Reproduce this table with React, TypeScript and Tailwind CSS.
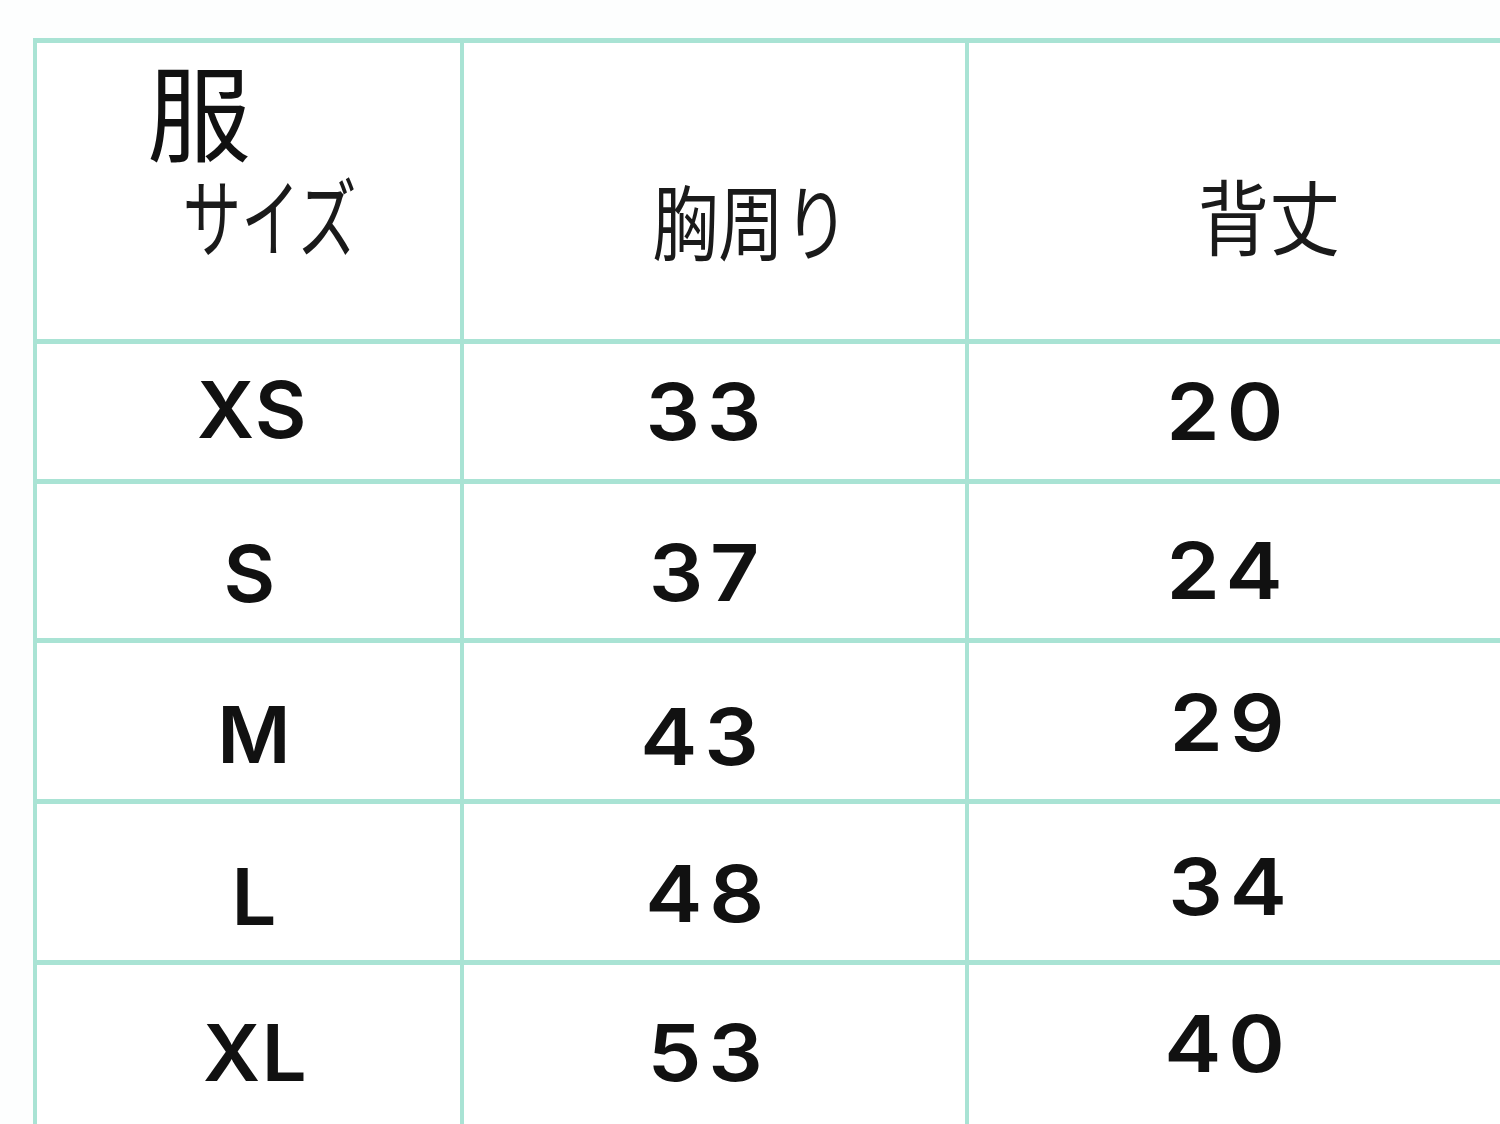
import React from "react";

const jp = "font-['Noto_Sans_CJK_JP','Noto_Sans',sans-serif]";
const num =
  "font-['Inter','Liberation_Sans',Arial,sans-serif] font-semibold text-[78px] leading-none text-[#111]";

type Row = {
  size: string;
  chest: string;
  back: string;
  sizeCls: string;
  chestCls: string;
  backCls: string;
};

const rows: Row[] = [
  {
    size: "XS",
    chest: "33",
    back: "20",
    sizeCls: "translate-x-[4px] -translate-y-[2px]",
    chestCls: "-translate-x-[8px] translate-y-0",
    backCls: "-translate-x-[43px] translate-y-0",
  },
  {
    size: "S",
    chest: "37",
    back: "24",
    sizeCls: "translate-x-[2px] translate-y-[13px]",
    chestCls: "-translate-x-[7px] translate-y-[12px]",
    backCls: "-translate-x-[43px] translate-y-[10px]",
  },
  {
    size: "M",
    chest: "43",
    back: "29",
    sizeCls: "translate-x-[6px] translate-y-[14px]",
    chestCls: "-translate-x-[11px] translate-y-[16px]",
    backCls: "-translate-x-[41px] translate-y-[2px]",
  },
  {
    size: "L",
    chest: "48",
    back: "34",
    sizeCls: "translate-x-[6px] translate-y-[15px]",
    chestCls: "-translate-x-[6px] translate-y-[12px]",
    backCls: "-translate-x-[40px] translate-y-[5px]",
  },
  {
    size: "XL",
    chest: "53",
    back: "40",
    sizeCls: "translate-x-[7px] translate-y-[8px]",
    chestCls: "-translate-x-[6px] translate-y-[8px]",
    backCls: "-translate-x-[43px] -translate-y-[1px]",
  },
];

function Letters({ text, className }: { text: string; className: string }) {
  return (
    <span className={`${num} tracking-[0.02em] scale-x-[1.02] ${className}`}>
      {text}
    </span>
  );
}

function Digits({ text, className }: { text: string; className: string }) {
  return (
    <span className={`${num} tracking-[0.08em] scale-x-[1.1] ${className}`}>
      {text}
    </span>
  );
}

export default function App() {
  return (
    <div className="w-[1500px] h-[1124px] overflow-hidden bg-[#fdfefe]">
      <div className="pt-[38px] pl-[33px]">
        <div className="w-[1540px] grid grid-cols-[423px_501px_1fr] grid-rows-[296px_135px_154px_156px_156px_160px] gap-x-[4px] gap-y-[5px] pt-[5px] pl-[4px] bg-[#a9e3d4]">
          {/* header */}
          <div className="bg-white pl-[110px] pt-[14px] flex flex-col items-start">
            <div className={`${jp} text-[104px] leading-none text-[#111]`}>服</div>
            <div
              className={`${jp} text-[86px] leading-none text-[#1a1a1a] -ml-[5px] mt-[10px] scale-x-[0.68]`}
            >
              サイズ
            </div>
          </div>
          <div className="bg-white flex items-center justify-center">
            <span
              className={`${jp} text-[82px] leading-none text-[#1a1a1a] translate-x-[37px] translate-y-[28px] scale-x-[0.8]`}
            >
              胸周り
            </span>
          </div>
          <div className="bg-white flex items-center justify-center">
            <span
              className={`${jp} text-[82px] leading-none text-[#1a1a1a] -translate-x-[2px] translate-y-[23px] scale-x-[0.87]`}
            >
              背丈
            </span>
          </div>

          {rows.map((r) => (
            <React.Fragment key={r.size}>
              <div className="bg-white flex items-center justify-center">
                <Letters text={r.size} className={r.sizeCls} />
              </div>
              <div className="bg-white flex items-center justify-center">
                <Digits text={r.chest} className={r.chestCls} />
              </div>
              <div className="bg-white flex items-center justify-center">
                <Digits text={r.back} className={r.backCls} />
              </div>
            </React.Fragment>
          ))}
        </div>
      </div>
    </div>
  );
}
